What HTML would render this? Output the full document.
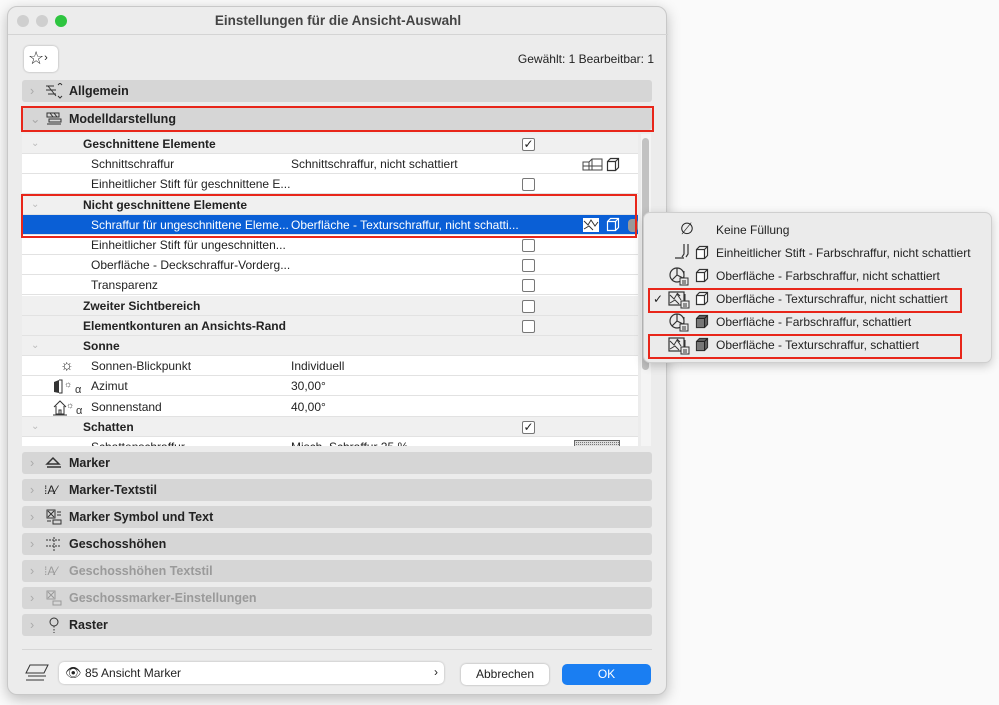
<!DOCTYPE html>
<html><head><meta charset="utf-8"><style>
*{box-sizing:border-box;margin:0;padding:0}
body{width:999px;height:705px;background:#fafafa;font-family:"Liberation Sans",sans-serif;font-size:12px;color:#222;position:relative;overflow:hidden}
.abs{position:absolute}
.win{left:7px;top:6px;width:660px;height:689px;background:#ececec;border-radius:10px;border:1px solid #c8c8c8;box-shadow:0 4px 14px rgba(0,0,0,.25)}
.title{left:0;top:0;width:660px;height:28px;border-bottom:1px solid #d4d4d4;text-align:center;line-height:28px;font-weight:bold;font-size:13.5px;color:#444}
.dot{width:12px;height:12px;border-radius:50%;top:8px;background:#cfcfcf}
.hdr{left:22px;width:630px;height:22px;background:#d6d6d6;border-radius:3px;font-weight:bold;font-size:12.5px;line-height:22px;padding-left:47px}
.hdr .ch{position:absolute;left:8px;color:#aaa;font-weight:normal}
.hdr .ic{position:absolute;left:22px;top:3px;width:20px;height:16px}
.dis{color:#9a9a9a}
.tbl{left:22px;top:134px;width:616px;height:312px;background:#fff;overflow:hidden}
.row{position:absolute;left:0;width:616px;height:20px;border-bottom:1px solid #e2e2e2;line-height:20px;background:#fff}
.grp{background:#f0f0f0}
.row .l{position:absolute;left:69px}
.row .b{position:absolute;left:61px;font-weight:bold}
.row .v{position:absolute;left:269px}
.row .cb{position:absolute;left:500px;top:4px;width:13px;height:13px;border:1px solid #777;border-radius:2px;background:#fff;font-size:12px;line-height:11px;text-align:center}
.row .ch{position:absolute;left:9px;color:#bbb;font-size:10px}
.sel{background:#0a5fd6;color:#fff}
.red{position:absolute;border:2px solid #e8261a}
.menu{left:643px;top:212px;width:349px;height:151px;background:#ebebeb;border:1px solid #cfcfcf;border-radius:7px;box-shadow:0 3px 10px rgba(0,0,0,.2)}
.mi{position:absolute;left:72px;font-size:12px}
.mic{position:absolute}
</style></head><body>
<svg width="0" height="0" style="position:absolute">
<defs>
<g id="cube"><path d="M1.5 4.5l3-3h8v9l-3 3h-8z" fill="#fff" stroke="#333" stroke-width="1.2"/><path d="M1.5 4.5h8v9M9.5 4.5l3-3" fill="none" stroke="#333" stroke-width="1.2"/></g>
<g id="cubef"><path d="M1.5 4.5l3-3h8v9l-3 3h-8z" fill="#666" stroke="#333" stroke-width="1.2"/><path d="M1.5 4.5h8v9M9.5 4.5l3-3" fill="none" stroke="#222" stroke-width="1.2"/><path d="M2 5h7v8H2z" fill="#777"/></g>
<g id="pie"><circle cx="8" cy="8" r="7" fill="none" stroke="#333" stroke-width="1.2"/><path d="M8 1v7l-5 5M8 8l6 3" fill="none" stroke="#333" stroke-width="1.2"/><rect x="11" y="11" width="8" height="7" fill="#ebebeb" stroke="#333"/><path d="M15 4v7M13 14h4M13 16h4" stroke="#333"/></g>
<g id="tex"><rect x="1" y="2" width="15" height="13" fill="none" stroke="#333" stroke-width="1.2"/><path d="M2 5l4 4 3-5 4 6M2 13l5-3 4 4M9 3l3 3" fill="none" stroke="#333"/><rect x="13" y="11" width="8" height="7" fill="#ebebeb" stroke="#333"/><path d="M17 4v7M15 14h4M15 16h4" stroke="#333"/></g>
</defs></svg>
<div class="abs win">
 <div class="abs title">Einstellungen für die Ansicht-Auswahl</div>
 <div class="abs dot" style="left:9px"></div>
 <div class="abs dot" style="left:28px"></div>
 <div class="abs dot" style="left:47px;background:#2ec540"></div>
 <div class="abs" style="left:16px;top:39px;width:34px;height:26px;background:#fff;border-radius:5px;box-shadow:0 0 2px rgba(0,0,0,.3);font-size:18px;line-height:24px;padding-left:4px">☆<span style="font-size:11px;vertical-align:3px">›</span></div>
 <div class="abs" style="right:12px;top:45px;font-size:12px">Gewählt: 1 Bearbeitbar: 1</div>
</div>

<div class="abs hdr" style="top:80px"><span class="ch">›</span><svg class="ic" viewBox="0 0 20 16"><path d="M2 3h8M2 7h10M4 11h8M4 3l8 10M14 2l2-2 2 2M14 13l2 2 2-2" stroke="#333" fill="none"/></svg>Allgemein</div>
<div class="abs hdr" style="top:108px"><span class="ch">⌄</span><svg class="ic" viewBox="0 0 20 16"><path d="M3 2h12v4H3zM5 8h12v3H5zM3 13h14M6 2l3 4M10 2l3 4" stroke="#333" fill="none"/></svg>Modelldarstellung</div>
<div class="red" style="left:21px;top:106px;width:633px;height:26px"></div>

<div class="abs tbl">
 <div class="row grp" style="top:0"><span class="ch">⌄</span><span class="b">Geschnittene Elemente</span><span class="cb">✓</span></div>
 <div class="row" style="top:20px"><span class="l">Schnittschraffur</span><span class="v">Schnittschraffur, nicht schattiert</span><svg class="abs" style="left:560px;top:3px" width="40" height="15" viewBox="0 0 40 15"><path d="M1 13V5h6l3-3h10v11zM7 5v8M10 2v11M1 9h19" stroke="#444" fill="none"/><use href="#cube" x="24" y="0"/></svg></div>
 <div class="row" style="top:40px"><span class="l">Einheitlicher Stift für geschnittene E...</span><span class="cb"></span></div>
 <div class="row grp" style="top:61px"><span class="ch">⌄</span><span class="b">Nicht geschnittene Elemente</span></div>
 <div class="row sel" style="top:81px"><span class="l">Schraffur für ungeschnittene Eleme...</span><span class="v">Oberfläche - Texturschraffur, nicht schatti...</span><svg class="abs" style="left:560px;top:2px" width="40" height="16" viewBox="0 0 40 16"><rect x="1" y="1" width="16" height="14" fill="#fff"/><path d="M2 4l4 4 3-5 4 6 3-4M2 12l5-3 4 4" stroke="#333" fill="none"/><path d="M25.5 4.5l3-3h8v9l-3 3h-8zM25.5 4.5h8v9M33.5 4.5l3-3" stroke="#fff" stroke-width="1.2" fill="none"/></svg><span class="abs" style="left:606px;top:4px;width:10px;height:13px;background:#999;border-radius:4px"></span></div>
 <div class="row" style="top:101px"><span class="l">Einheitlicher Stift für ungeschnitten...</span><span class="cb"></span></div>
 <div class="row" style="top:121px"><span class="l">Oberfläche - Deckschraffur-Vorderg...</span><span class="cb"></span></div>
 <div class="row" style="top:141px"><span class="l">Transparenz</span><span class="cb"></span></div>
 <div class="row grp" style="top:162px"><span class="b">Zweiter Sichtbereich</span><span class="cb"></span></div>
 <div class="row grp" style="top:182px"><span class="b">Elementkonturen an Ansichts-Rand</span><span class="cb"></span></div>
 <div class="row grp" style="top:202px"><span class="ch">⌄</span><span class="b">Sonne</span></div>
 <div class="row" style="top:222px"><span class="abs" style="left:38px;font-size:15px">☼</span><span class="l">Sonnen-Blickpunkt</span><span class="v">Individuell</span></div>
 <div class="row" style="top:242px"><svg class="abs" style="left:30px;top:2px" width="36" height="17" viewBox="0 0 36 17"><path d="M2 4l5-2v13l-5-1z" fill="#333"/><path d="M7 2h3v13H7" fill="none" stroke="#333"/><text x="12" y="9" font-size="9" fill="#333">☼</text><text x="23" y="15" font-size="11" fill="#333">α</text></svg><span class="l">Azimut</span><span class="v">30,00°</span></div>
 <div class="row" style="top:263px"><svg class="abs" style="left:30px;top:2px" width="36" height="17" viewBox="0 0 36 17"><path d="M2 8l6-6 6 6M4 7v8h8V7M7 15v-4h2v4M1 16h14" fill="none" stroke="#333"/><text x="14" y="9" font-size="9" fill="#333">☼</text><text x="24" y="15" font-size="11" fill="#333">α</text></svg><span class="l">Sonnenstand</span><span class="v">40,00°</span></div>
 <div class="row grp" style="top:283px"><span class="ch">⌄</span><span class="b">Schatten</span><span class="cb">✓</span></div>
 <div class="row" style="top:303px"><span class="l">Schattenschraffur</span><span class="v">Misch. Schraffur 25 %</span><svg class="abs" style="left:552px;top:3px" width="46" height="14"><defs><pattern id="dp" width="2" height="2" patternUnits="userSpaceOnUse"><rect width="1" height="1" fill="#777"/></pattern></defs><rect x=".5" y=".5" width="45" height="13" fill="#ddd" stroke="#666"/><rect x="1" y="1" width="44" height="12" fill="url(#dp)"/></svg></div>
</div>
<div class="red" style="left:21px;top:194px;width:616px;height:44px"></div>
<div class="abs" style="left:641px;top:134px;width:10px;height:312px;background:#f4f4f4"></div>
<div class="abs" style="left:642px;top:138px;width:7px;height:232px;background:#c2c2c2;border-radius:4px"></div>

<div class="abs hdr" style="top:452px"><span class="ch">›</span><svg class="ic" viewBox="0 0 20 16"><path d="M3 9l6-6 6 6zM3 12h14" stroke="#333" stroke-width="1.5" fill="none"/></svg>Marker</div>
<div class="abs hdr" style="top:479px"><span class="ch">›</span><span class="ic" style="font-size:12px;font-weight:normal;line-height:16px">⁞A⁄</span>Marker-Textstil</div>
<div class="abs hdr" style="top:506px"><span class="ch">›</span><svg class="ic" viewBox="0 0 20 16"><rect x="3" y="1" width="8" height="8" stroke="#333" fill="none"/><path d="M4 2l6 6M10 2l-6 6M13 3h4M13 6h4M9 11h8v4H9zM3 12h4" stroke="#333" fill="none"/></svg>Marker Symbol und Text</div>
<div class="abs hdr" style="top:533px"><span class="ch">›</span><svg class="ic" viewBox="0 0 20 16"><path d="M2 4h14M2 10h14M10 1v14" stroke="#333" stroke-dasharray="2 1" fill="none"/></svg>Geschosshöhen</div>
<div class="abs hdr dis" style="top:560px"><span class="ch">›</span><span class="ic" style="font-size:12px;font-weight:normal;line-height:16px">⁞A⁄</span>Geschosshöhen Textstil</div>
<div class="abs hdr dis" style="top:587px"><span class="ch">›</span><svg class="ic" viewBox="0 0 20 16"><rect x="3" y="1" width="8" height="8" stroke="#999" fill="none"/><path d="M4 2l6 6M10 2l-6 6M9 11h8v4H9z" stroke="#999" fill="none"/></svg>Geschossmarker-Einstellungen</div>
<div class="abs hdr" style="top:614px"><span class="ch">›</span><svg class="ic" viewBox="0 0 20 16"><circle cx="10" cy="5" r="4" stroke="#333" fill="none"/><path d="M10 9v7" stroke="#333" stroke-dasharray="1.5 1.5"/></svg>Raster</div>

<div class="abs" style="left:22px;top:649px;width:630px;height:1px;background:#d6d6d6"></div>
<svg class="abs" style="left:24px;top:663px" width="26" height="20" viewBox="0 0 26 20"><path d="M6 2h18l-4 8H2zM4 13h18M2 17h18" stroke="#333" fill="none"/></svg>
<div class="abs" style="left:59px;top:662px;width:385px;height:22px;background:#fff;border-radius:5px;box-shadow:0 0 2px rgba(0,0,0,.25);line-height:22px;padding-left:26px;font-size:12px">85 Ansicht Marker<span class="abs" style="left:6px;top:0;font-size:13px">👁</span><span class="abs" style="right:6px;top:-1px">›</span></div>
<div class="abs" style="left:461px;top:664px;width:88px;height:21px;background:#fff;border-radius:5px;box-shadow:0 0 2px rgba(0,0,0,.3);text-align:center;line-height:21px">Abbrechen</div>
<div class="abs" style="left:562px;top:664px;width:89px;height:21px;background:#1a7ef2;border-radius:5px;color:#fff;text-align:center;line-height:21px">OK</div>

<div class="abs menu">
 <span class="abs" style="left:36px;top:6px;font-size:16px">∅</span><span class="mi" style="top:10px">Keine Füllung</span>
 <svg class="mic" style="left:30px;top:30px" width="16" height="18" viewBox="0 0 16 18"><path d="M10 1v10l-2 3M14 1v10l-2 3M1 15h9" fill="none" stroke="#333" stroke-width="1.2"/></svg>
 <svg class="mic" style="left:51px;top:32px" width="14" height="15"><use href="#cube"/></svg>
 <span class="mi" style="top:33px">Einheitlicher Stift - Farbschraffur, nicht schattiert</span>
 <svg class="mic" style="left:25px;top:54px" width="22" height="19"><use href="#pie"/></svg>
 <svg class="mic" style="left:51px;top:55px" width="14" height="15"><use href="#cube"/></svg>
 <span class="mi" style="top:56px">Oberfläche - Farbschraffur, nicht schattiert</span>
 <span class="abs" style="left:9px;top:79px">✓</span>
 <svg class="mic" style="left:24px;top:77px" width="22" height="19"><use href="#tex"/></svg>
 <svg class="mic" style="left:51px;top:78px" width="14" height="15"><use href="#cube"/></svg>
 <span class="mi" style="top:79px">Oberfläche - Texturschraffur, nicht schattiert</span>
 <svg class="mic" style="left:25px;top:100px" width="22" height="19"><use href="#pie"/></svg>
 <svg class="mic" style="left:51px;top:101px" width="14" height="15"><use href="#cubef"/></svg>
 <span class="mi" style="top:102px">Oberfläche - Farbschraffur, schattiert</span>
 <svg class="mic" style="left:24px;top:123px" width="22" height="19"><use href="#tex"/></svg>
 <svg class="mic" style="left:51px;top:124px" width="14" height="15"><use href="#cubef"/></svg>
 <span class="mi" style="top:125px">Oberfläche - Texturschraffur, schattiert</span>
</div>
<div class="red" style="left:648px;top:288px;width:314px;height:25px"></div>
<div class="red" style="left:648px;top:334px;width:314px;height:25px"></div>
</body></html>
